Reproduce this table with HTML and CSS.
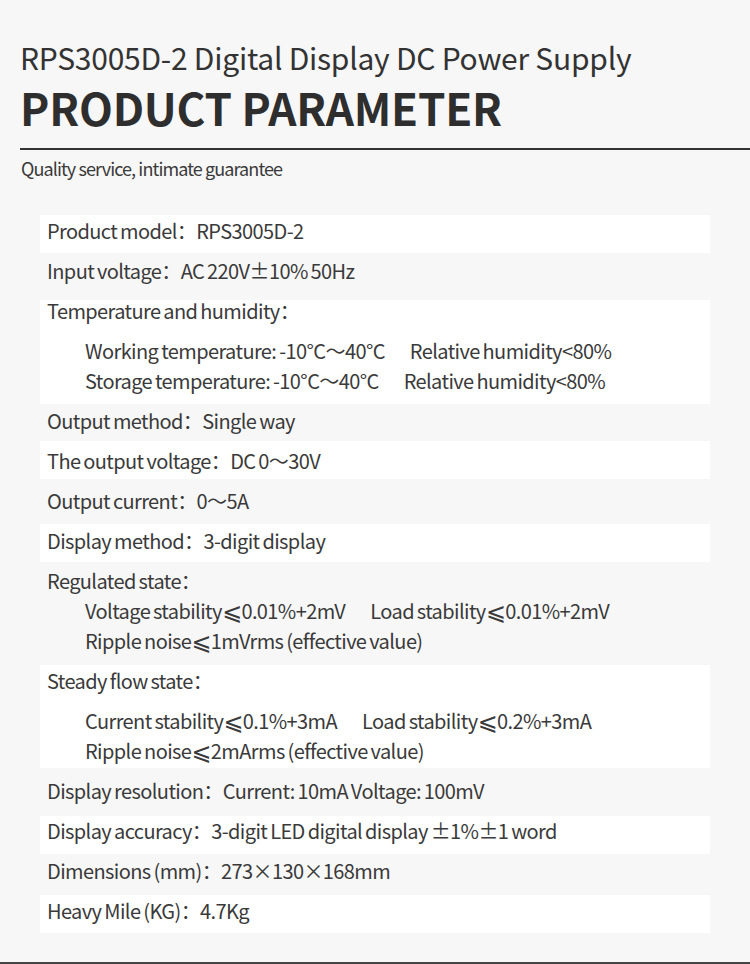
FILE: index.html
```html
<!DOCTYPE html>
<html lang="en">
<head>
<meta charset="utf-8">
<title>RPS3005D-2 Product Parameter</title>
<link rel="stylesheet" href="styles.css">
</head>
<body>
<div class="page">
  <header class="head">
    <h1 class="title">RPS3005D-2 Digital Display DC Power Supply</h1>
    <h2 class="big">PRODUCT PARAMETER</h2>
    <div class="rule"></div>
    <p class="sub">Quality service, intimate guarantee</p>
  </header>
  <div class="table">
    <div class="row w"><div class="ln">Product model：RPS3005D-2</div></div>
    <div class="row"><div class="ln">Input voltage：AC 220V±10% 50Hz</div></div>
    <div class="row w">
      <div class="ln">Temperature and humidity：</div>
      <div class="ln in gap2">Working temperature: -10°C～40°C<span class="sp">Relative humidity&lt;80%</span></div>
      <div class="ln in">Storage temperature: -10°C～40°C<span class="sp">Relative humidity&lt;80%</span></div>
    </div>
    <div class="row"><div class="ln">Output method：Single way</div></div>
    <div class="row w"><div class="ln">The output voltage：DC 0～30V</div></div>
    <div class="row"><div class="ln">Output current：0～5A</div></div>
    <div class="row w"><div class="ln">Display method：3-digit display</div></div>
    <div class="row">
      <div class="ln">Regulated state：</div>
      <div class="ln in">Voltage stability<span class="le">⩽</span>0.01%+2mV<span class="sp">Load stability<span class="le">⩽</span>0.01%+2mV</span></div>
      <div class="ln in">Ripple noise<span class="le">⩽</span>1mVrms (effective value)</div>
    </div>
    <div class="row w">
      <div class="ln">Steady flow state：</div>
      <div class="ln in gap2">Current stability<span class="le">⩽</span>0.1%+3mA<span class="sp">Load stability<span class="le">⩽</span>0.2%+3mA</span></div>
      <div class="ln in">Ripple noise<span class="le">⩽</span>2mArms (effective value)</div>
    </div>
    <div class="row"><div class="ln">Display resolution：Current: 10mA Voltage: 100mV</div></div>
    <div class="row w"><div class="ln">Display accuracy：3-digit LED digital display ±1%±1 word</div></div>
    <div class="row"><div class="ln">Dimensions (mm)：273×130×168mm</div></div>
    <div class="row w"><div class="ln">Heavy Mile (KG)：4.7Kg</div></div>
  </div>
  <div class="foot"></div>
</div>
</body>
</html>
```

FILE: styles.css
```css
html, body {
  margin: 0;
  padding: 0;
  background: #f7f7f7;
}
.page {
  width: 750px;
  height: 964px;
  display: flex;
  flex-direction: column;
  font-family: "Noto Sans CJK SC", "Noto Sans", sans-serif;
  color: #3a3a3a;
}
.head {
  padding-left: 20px;
}
.title {
  margin: 0;
  padding-top: 37px;
  font-size: 30px;
  font-weight: 400;
  line-height: 40px;
  color: #333;
  letter-spacing: -0.25px;
}
.big {
  margin: 0;
  margin-top: 5px;
  font-size: 44px;
  font-weight: 700;
  line-height: 50px;
  color: #2e2e2e;
  letter-spacing: -0.2px;
}
.rule {
  margin-top: 16px;
  height: 2px;
  background: #333;
}
.sub {
  margin: 0;
  padding-top: 6px;
  padding-left: 1px;
  font-size: 18px;
  line-height: 24px;
  color: #3a3a3a;
  letter-spacing: -0.9px;
}
.table {
  margin-top: 35px;
  margin-left: 40px;
  width: 670px;
  display: grid;
  grid-template-rows: 38px 47px 104px 37px 38px 45px 38px 103px 103px 48px 38px 41px 38px;
}
.row {
  box-sizing: border-box;
  padding-left: 7px;
  display: flex;
  flex-direction: column;
  gap: 10px;
}
.row.w {
  background: #fff;
}
.ln {
  font-size: 20px;
  line-height: 20px;
  height: 20px;
  white-space: pre;
  letter-spacing: -0.6px;
  word-spacing: -1px;
}
.in {
  padding-left: 38px;
}
.gap2 {
  margin-top: 10px;
}
.sp {
  margin-left: 25px;
}
.le {
  font-family: "DejaVu Sans", sans-serif;
  font-size: 24px;
  line-height: 20px;
  vertical-align: -1px;
}
.row:nth-child(1) { padding-top: 6px; }
.row:nth-child(2) { padding-top: 8px; }
.row:nth-child(3) { padding-top: 1px; }
.row:nth-child(4) { padding-top: 7px; }
.row:nth-child(5) { padding-top: 10px; }
.row:nth-child(6) { padding-top: 12px; }
.row:nth-child(7) { padding-top: 7px; }
.row:nth-child(8) { padding-top: 9px; }
.row:nth-child(9) { padding-top: 6px; }
.row:nth-child(10) { padding-top: 13px; }
.row:nth-child(11) { padding-top: 5px; }
.row:nth-child(12) { padding-top: 7px; }
.row:nth-child(13) { padding-top: 6px; }
.foot {
  margin-top: auto;
  height: 2px;
  background: #444;
}
```
